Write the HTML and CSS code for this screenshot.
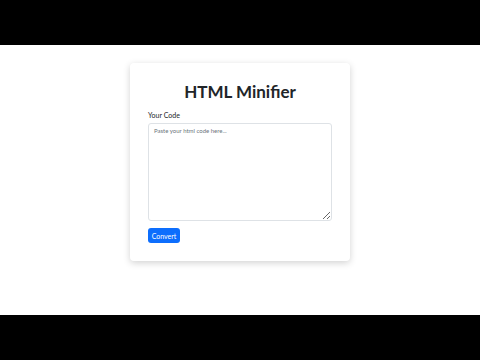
FILE: index.html
```html
<!DOCTYPE html>
<html lang="en">
<head>
    <meta charset="UTF-8">
    <meta name="viewport" content="width=device-width, initial-scale=1.0">
    <title>HTML Minifier</title>
    <link rel="stylesheet" href="styles.css">
</head>
<body>
<div class="bar"></div>
<main class="page">
    <div class="card">
        <h1>HTML Minifier</h1>
        <label for="code" class="label">Your Code</label>
        <textarea id="code" class="code" spellcheck="false" placeholder="Paste your html code here..."></textarea>
        <div class="actions">
            <button type="button" class="btn">Convert</button>
        </div>
    </div>
</main>
<div class="bar"></div>
</body>
</html>
```

FILE: styles.css
```css
* {
    margin: 0;
    padding: 0;
    box-sizing: border-box;
    font-family: "Lato", "Noto Sans", sans-serif;
}

body {
    background: #000000;
    width: 480px;
    height: 360px;
}

.bar {
    height: 45px;
    background: #000000;
}

.page {
    height: 270px;
    background: #ffffff;
    display: flex;
    justify-content: center;
    align-items: flex-start;
    padding-top: 18px;
}

.card {
    width: 220px;
    height: 198px;
    background: #ffffff;
    border-radius: 4px;
    box-shadow: 0 2px 7px rgba(0, 0, 0, 0.18);
    padding: 18px 18px 0 18px;
    display: flex;
    flex-direction: column;
}

.card h1 {
    font-size: 17px;
    font-weight: 700;
    text-align: center;
    color: #212529;
    line-height: 22px;
    margin-bottom: 7px;
}

.label {
    font-size: 7px;
    color: #212529;
    line-height: 10px;
    margin-bottom: 3px;
}

.code {
    width: 100%;
    height: 98px;
    border: 1px solid #dee2e6;
    border-radius: 3px;
    padding: 3px 5px;
    font-family: "Lato", "Noto Sans", sans-serif;
    font-size: 6px;
    color: #212529;
    resize: vertical;
    outline: none;
}

.code::placeholder {
    color: #6c757d;
}

.actions {
    display: flex;
    margin-top: 7px;
}

.btn {
    height: 15px;
    width: 32px;
    padding: 0;
    border: none;
    border-radius: 3px;
    background: #0d6efd;
    color: #ffffff;
    font-family: "Lato", "Noto Sans", sans-serif;
    font-size: 7px;
    cursor: pointer;
}
```
